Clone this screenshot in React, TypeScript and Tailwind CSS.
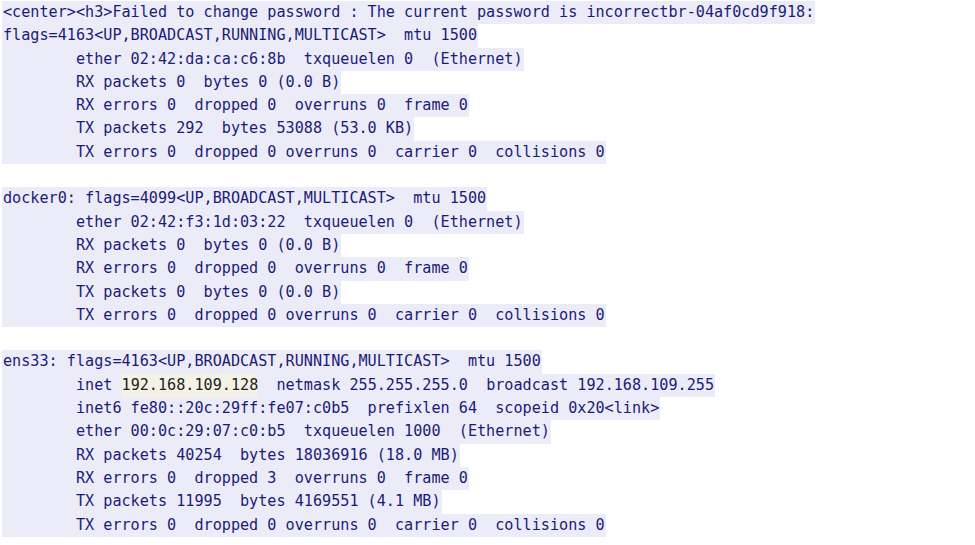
const lines: (string | null)[] = [
  '<center><h3>Failed to change password : The current password is incorrectbr-04af0cd9f918:',
  'flags=4163<UP,BROADCAST,RUNNING,MULTICAST>  mtu 1500',
  '        ether 02:42:da:ca:c6:8b  txqueuelen 0  (Ethernet)',
  '        RX packets 0  bytes 0 (0.0 B)',
  '        RX errors 0  dropped 0  overruns 0  frame 0',
  '        TX packets 292  bytes 53088 (53.0 KB)',
  '        TX errors 0  dropped 0 overruns 0  carrier 0  collisions 0',
  null,
  'docker0: flags=4099<UP,BROADCAST,MULTICAST>  mtu 1500',
  '        ether 02:42:f3:1d:03:22  txqueuelen 0  (Ethernet)',
  '        RX packets 0  bytes 0 (0.0 B)',
  '        RX errors 0  dropped 0  overruns 0  frame 0',
  '        TX packets 0  bytes 0 (0.0 B)',
  '        TX errors 0  dropped 0 overruns 0  carrier 0  collisions 0',
  null,
  'ens33: flags=4163<UP,BROADCAST,RUNNING,MULTICAST>  mtu 1500',
  'INET',
  '        inet6 fe80::20c:29ff:fe07:c0b5  prefixlen 64  scopeid 0x20<link>',
  '        ether 00:0c:29:07:c0:b5  txqueuelen 1000  (Ethernet)',
  '        RX packets 40254  bytes 18036916 (18.0 MB)',
  '        RX errors 0  dropped 3  overruns 0  frame 0',
  '        TX packets 11995  bytes 4169551 (4.1 MB)',
  '        TX errors 0  dropped 0 overruns 0  carrier 0  collisions 0',
];

export default function App() {
  return (
    <div
      className="w-[975px] h-[545px] overflow-hidden bg-white pl-[2px] pt-[1px] text-[15.15px] leading-[23.3px] text-[#1b1b78] whitespace-pre"
      style={{ fontFamily: '"DejaVu Sans Mono", "Liberation Mono", monospace' }}
    >
      {lines.map((line, i) => (
        <div key={i} className="h-[23.3px]">
          {line === 'INET' ? (
            <span className="inline-block h-[23.3px] bg-[#ececf8] px-[1px]">
              {'        inet '}
              <span className="inline-block h-[23.3px] bg-[#f4f2e6] text-[#222222]">192.168.109.128</span>
              {'  netmask 255.255.255.0  broadcast 192.168.109.255'}
            </span>
          ) : line ? (
            <span className="inline-block h-[23.3px] bg-[#ececf8] px-[1px]">{line}</span>
          ) : null}
        </div>
      ))}
    </div>
  );
}
